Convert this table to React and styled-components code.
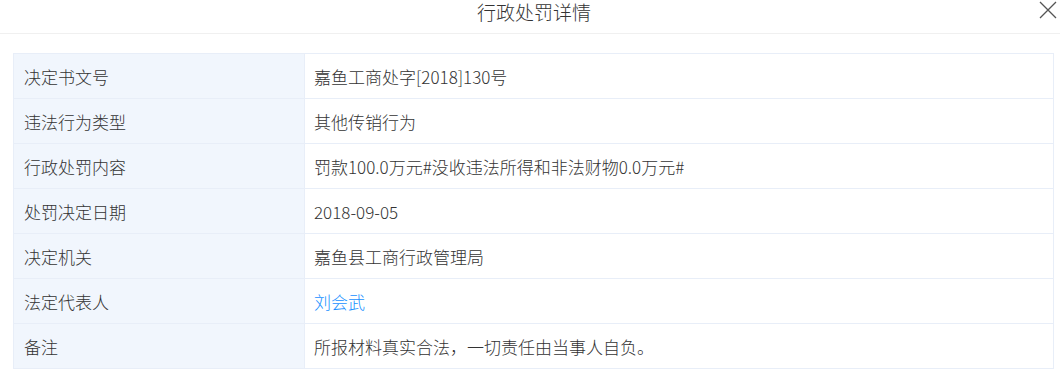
import styled, { createGlobalStyle } from 'styled-components';

const GlobalStyle = createGlobalStyle`
  body {
    margin: 0;
    background: #fff;
    font-family: "Noto Sans CJK SC", "Noto Sans", sans-serif;
  }
`;

const Header = styled.div`
  position: relative;
  height: 33px;
  border-bottom: 1px solid #f0f0f0;
  display: flex;
  justify-content: center;
`;

const Title = styled.div`
  font-size: 19px;
  line-height: 21px;
  font-weight: 300;
  color: #333;
  margin-top: 1px;
  padding-left: 8px;
`;

const Close = styled.button`
  position: absolute;
  top: 1px;
  right: 3px;
  width: 18px;
  height: 18px;
  padding: 0;
  border: 0;
  background: none;
  cursor: pointer;
  svg { display: block; }
`;

const Body = styled.div`
  padding: 19px 6px 0 13px;
`;

const Table = styled.div`
  display: grid;
  grid-template-columns: 291px 1fr;
  border-top: 1px solid #e8eef8;
  border-left: 1px solid #e8eef8;
`;

const Cell = styled.div`
  height: 44px;
  display: flex;
  align-items: center;
  padding-left: ${p => (p.$label ? '10px' : '9px')};
  font-size: 17px;
  font-weight: 300;
  color: ${p => (p.$link ? '#1890ff' : '#333')};
  background: ${p => (p.$label ? '#f1f6fd' : '#fff')};
  border-right: 1px solid #e8eef8;
  border-bottom: 1px solid #e8eef8;
`;

const rows = [
  ['决定书文号', '嘉鱼工商处字[2018]130号'],
  ['违法行为类型', '其他传销行为'],
  ['行政处罚内容', '罚款100.0万元#没收违法所得和非法财物0.0万元#'],
  ['处罚决定日期', '2018-09-05'],
  ['决定机关', '嘉鱼县工商行政管理局'],
  ['法定代表人', '刘会武', true],
  ['备注', '所报材料真实合法，一切责任由当事人自负。'],
];

export default function App() {
  return (
    <>
      <GlobalStyle />
      <Header>
        <Title>行政处罚详情</Title>
        <Close aria-label="close">
          <svg width="18" height="18" viewBox="0 0 18 18">
            <path d="M1 1L17 17M17 1L1 17" stroke="#555" strokeWidth="1.3" fill="none" />
          </svg>
        </Close>
      </Header>
      <Body>
        <Table>
          {rows.map(([k, v, link]) => (
            <>
              <Cell $label key={k}>{k}</Cell>
              <Cell $link={link} key={k + 'v'}>{v}</Cell>
            </>
          ))}
        </Table>
      </Body>
    </>
  );
}
